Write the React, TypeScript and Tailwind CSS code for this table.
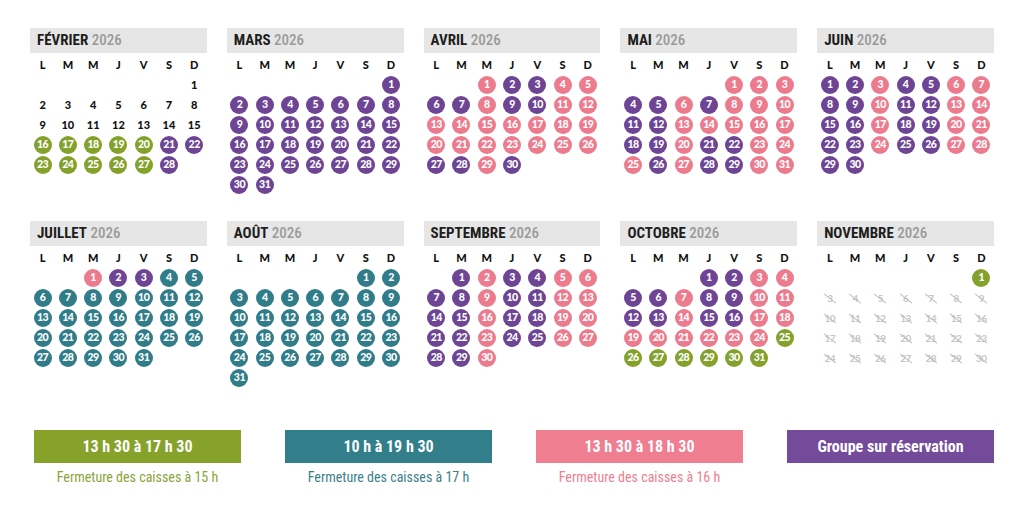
type Code = 'n' | 'g' | 't' | 'p' | 'v' | 'x'
type Day = { d: number; c: Code }

const days = (start: number, codes: string): Day[] =>
  codes.split('').map((c, i) => ({ d: start + i, c: c as Code }))

const MONTHS: { name: string; offset: number; days: Day[] }[] = [
  { name: 'FÉVRIER', offset: 6, days: days(1, 'nnnnnnnnnnnnnnn' + 'gggggvv' + 'gggggv') },
  { name: 'MARS', offset: 6, days: days(1, 'v'.repeat(31)) },
  { name: 'AVRIL', offset: 2, days: days(1, 'pvvpp' + 'vvpvvpp' + 'ppppppp' + 'ppppppp' + 'vvpv') },
  { name: 'MAI', offset: 4, days: days(1, 'ppp' + 'vvpvppp' + 'vvppppp' + 'vvpvvpp' + 'pvpvvpp') },
  { name: 'JUIN', offset: 0, days: days(1, 'vvpvvpp'.repeat(4) + 'vv') },
  { name: 'JUILLET', offset: 2, days: days(1, 'pvvtt' + 't'.repeat(26)) },
  { name: 'AOÛT', offset: 5, days: days(1, 't'.repeat(31)) },
  { name: 'SEPTEMBRE', offset: 1, days: days(1, 'vpvvpp' + 'vvpvvpp'.repeat(3) + 'vvp') },
  { name: 'OCTOBRE', offset: 3, days: days(1, 'vvpp' + 'vvpvvpp' + 'vvpvvpp' + 'ppppppg' + 'gggggg') },
  { name: 'NOVEMBRE', offset: 6, days: [...days(1, 'g'), ...days(3, 'x'.repeat(28))] },
]

const WEEK = ['L', 'M', 'M', 'J', 'V', 'S', 'D']

const FILL: Record<string, string> = {
  g: 'bg-[#84a12c] text-white',
  t: 'bg-[#307d89] text-white',
  p: 'bg-[#ec7b8e] text-white',
  v: 'bg-[#6e4594] text-white',
}

const condensed = { fontFamily: '"Roboto Condensed", "Liberation Sans Narrow", Roboto, sans-serif' }
const geo = { fontFamily: 'Lato, "Open Sans", sans-serif' }

function Cell({ day }: { day: Day }) {
  if (day.c === 'n') {
    return <span className="text-[11px] font-black text-[#111]">{day.d}</span>
  }
  if (day.c === 'x') {
    return (
      <span className="relative text-[10px] font-bold tracking-tighter text-[#c6c6c6]">
        {day.d}
        <span className="absolute top-1/2 left-1/2 h-px w-[15px] -translate-x-1/2 rotate-[38deg] bg-[#bdbdbd]" />
      </span>
    )
  }
  return (
    <span
      className={`flex h-[18px] w-[18px] items-center justify-center rounded-full text-[10.5px] font-black tracking-tighter ${FILL[day.c]}`}
    >
      {day.d}
    </span>
  )
}

function Month({ name, offset, days }: { name: string; offset: number; days: Day[] }) {
  return (
    <div>
      <div className="flex h-[25px] items-center bg-[#e6e6e6] pl-[7px]">
        <span className="text-[15px] whitespace-nowrap" style={condensed}>
          <span className="font-bold text-[#1e1e1e]">{name}</span>{' '}
          <span className="font-medium text-[#9a9a9a]">2026</span>
        </span>
      </div>
      <div className="grid grid-cols-7 auto-rows-[20px] pt-[2px]" style={geo}>
        {WEEK.map((w, i) => (
          <div key={i} className="flex items-center justify-center text-[11px] font-black text-[#111]">
            {w}
          </div>
        ))}
        {Array.from({ length: offset }).map((_, i) => (
          <div key={'e' + i} />
        ))}
        {days.map((d) => (
          <div key={d.d} className="flex items-center justify-center">
            <Cell day={d} />
          </div>
        ))}
      </div>
    </div>
  )
}

const LEGEND = [
  { label: '13 h 30 à 17 h 30', note: 'Fermeture des caisses à 15 h', box: 'bg-[#86a22b]', text: 'text-[#8ba43a]' },
  { label: '10 h à 19 h 30', note: 'Fermeture des caisses à 17 h', box: 'bg-[#327e8a]', text: 'text-[#3b7f8b]' },
  { label: '13 h 30 à 18 h 30', note: 'Fermeture des caisses à 16 h', box: 'bg-[#ee7e90]', text: 'text-[#ee7f92]' },
  { label: 'Groupe sur réservation', note: '', box: 'bg-[#744a9b]', text: 'text-[#744a9b]' },
]

export default function App() {
  return (
    <div className="h-[510px] w-[1024px] overflow-hidden bg-white">
      <div className="grid grid-cols-5 gap-x-5 gap-y-[26px] px-[30px] pt-[28px]">
        {MONTHS.map((m) => (
          <Month key={m.name} {...m} />
        ))}
      </div>

      <div className="mt-[42px] flex justify-between pr-[30px] pl-[34px]" style={condensed}>
        {LEGEND.map((l) => (
          <div key={l.label} className="flex w-[207px] flex-col items-center">
            <div className={`flex h-[33px] w-full items-center justify-center ${l.box}`}>
              <span className="text-[16px] font-bold whitespace-nowrap text-white">{l.label}</span>
            </div>
            {l.note && <span className={`mt-[4px] text-[14px] whitespace-nowrap ${l.text}`}>{l.note}</span>}
          </div>
        ))}
      </div>
    </div>
  )
}
